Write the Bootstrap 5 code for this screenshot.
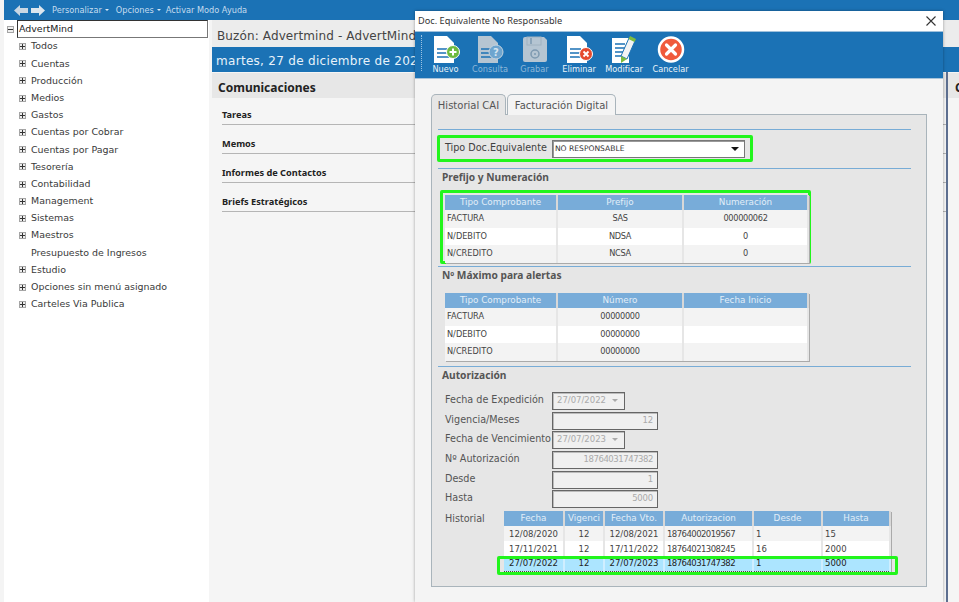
<!DOCTYPE html>
<html lang="es"><head><meta charset="utf-8"><title>AdvertMind</title>
<link rel="stylesheet" href="https://cdn.jsdelivr.net/npm/bootstrap@5.3.0/dist/css/bootstrap.min.css">
<style>
html,body{height:602px;overflow:hidden}
body{font-family:"DejaVu Sans","Noto Sans",sans-serif;font-size:10px;color:#404040;background:#f4f4f4;position:relative;padding-left:4px}
.topbar{height:20px;background:#1b72b5;color:#c5dcef;font-size:8.2px;padding-left:10px}
.topbar span{white-space:nowrap}
.arrow{width:14px;height:11px;display:block;margin-right:3px}
.caret-mini{display:inline-block;border:2.5px solid transparent;border-top-color:#dbe9f5;border-bottom:0;margin-left:3px;vertical-align:middle}
.menu-first{margin:0 7px 0 4px}
.menu-second{margin-right:5px}
.mainarea{height:582px}
.treepanel{width:205px;background:#fff;flex:none;font-size:9.45px;color:#3a3a3a}
.rootnode{height:18px;padding-left:3px}
.rootnode .plusbox{margin-right:3px}
.rootlabel{border:1px solid #333;border-right-color:#777;border-bottom-color:#777;width:191px;height:18px;line-height:16px;padding-left:1px;color:#222}
.treelist{margin-top:-.1px}
.treerow{height:17.2px;padding-left:15px}
.plusbox{width:5px;height:5px;border:1px solid #a5a5a5;background:#eee;flex:none;margin-right:5px;position:relative;display:block;box-sizing:content-box}
.plusbox::before{content:"";position:absolute;left:0;right:0;top:2px;height:1px;background:#333}
.plusbox.isplus::after{content:"";position:absolute;top:0;bottom:0;left:2px;width:1px;background:#333}
.nobox{width:12px;flex:none}
.contentpane{flex:1;min-width:0;overflow:hidden;background:#f5f5f5;padding-left:3px}
.buzon{height:27px;background:#ececec;font-size:12px;color:#444;padding:7px 5px 0;white-space:nowrap;letter-spacing:.12px}
.dateband{height:25px;background:#1b72b5;color:#e8f2fa;font-size:12px;padding:5px 4px 0;letter-spacing:.3px;white-space:nowrap}
.comm{height:25px;margin-top:1px;background:#e7e7e7;font-weight:700;color:#222;padding:6px 6px 0;line-height:18px;font-family:"Noto Sans",sans-serif;font-size:12px}
.commrow{margin-left:10px;height:29px;border-bottom:1px solid #b5b5b5;font-weight:700;font-size:9.2px;color:#222;padding-top:12px;line-height:14px;font-family:"Noto Sans",sans-serif}
.commfirst{padding-top:10px;height:27px}
.sidestub{position:absolute;left:946px;top:72px;width:13px;height:530px;border-left:2px solid #5d6f90;background:#f5f5f5}
.sidestub span{display:block;background:#e7e7e7;padding:6px 0 0 7px;height:25px;line-height:18px;font-weight:700;font-size:12px;color:#222;margin-top:1px;overflow:hidden;font-family:"Noto Sans",sans-serif}
.winbox{position:absolute;left:415px;top:11px;width:528px;height:591px;background:#f4f4f4;box-shadow:0 0 3px rgba(0,0,0,.35)}
.wintitle{height:21px;background:#fff;color:#333;font-size:9.2px;font-family:"Noto Sans",sans-serif;padding:0 3px;border-bottom:1px solid #9fc1dc}
.closex{width:10px;height:10px;margin-right:4px}
.tools{height:47px;background:#1b72b5;padding-left:6px;border-bottom:1px solid #a8c4da}
.dotsep{width:0;height:36px;border-left:1px dotted #9cc3e3;margin:3px 1px 0 0}
.tool{width:45px;text-align:center;color:#e9f2f9;font-size:8.2px;padding-top:3px;line-height:9px;white-space:nowrap}
.tool svg{display:block;margin:0 auto;width:30px;height:30px}
.tool.off{color:#8db7d8}
.tool.w44{width:44px}.tool.w46{width:46px}.tool.w47{width:47px}
.tabstrip{margin:15px 0 0 16px;height:21px;gap:1px;font-size:10px;position:relative;z-index:1}
.tabitem{border:1px solid #a9b4bb;border-bottom:0;border-radius:5px 5px 0 0;padding:3px 0 0;background:#f4f4f4;color:#555;white-space:nowrap;text-align:center}
.tabitem.on{background:#e6e6e6;width:75px}
.tabitem.other{width:109px}
.tabpane{margin:-1px 16px 0;height:473px;background:#e6e6e6;border:1px solid #a9b4bb;padding:14px 15px 0 6px}
.secline{height:0;border-top:1px solid #78acd6}
.secline.after-tipo{margin-top:6px}
.secline.after-grid{margin-top:2px}
.greenbox{border:3px solid #22f51c;border-radius:2px}
.tiporow{height:27px;margin:5px 158px 0 -1px;padding-left:5px;gap:5px;font-size:9.65px}
.fakeselect{width:193px;height:18px;background:#fff;border:1px solid #777;box-shadow:inset 1px 1px 0 #999;font-size:7.6px;line-height:16px;padding-left:2px;position:relative;color:#333}
.fakeselect::after{content:"";position:absolute;right:5px;top:6px;border:4px solid transparent;border-top-color:#111;border-bottom:0}
.sectitle{font-size:10.2px;font-weight:700;color:#555;font-family:"Noto Sans",sans-serif;padding:2px 0 0 4px;height:17px;line-height:13px}
.gridwrap{margin:4px 100px 0 2px;padding:2px 0 0 2px;height:74px}
table.sheet{table-layout:fixed;border-collapse:collapse;font-size:8.2px;color:#444;margin:0;box-shadow:1px 1px 0 #aaa}
table.sheet th{background:#78acd9;color:#e2eef8;font-weight:400;text-align:center;height:15px;padding:0;border-right:2px solid #d8d8d8;font-size:8.8px;line-height:13px}
table.sheet td{height:17.5px;padding:0 2px 1px;border-right:2px solid #e6e6e6;white-space:nowrap;overflow:hidden;line-height:12px}
table.sheet td.text-center{letter-spacing:-.3px}
table.sheet tr:nth-child(odd) td{background:#f3f3f3}
table.sheet tr:nth-child(even) td{background:#fff}
.plainwrap{margin:9px 0 0 7px;height:73px}
.formrows{padding-left:7px;margin-top:8px}
.frow{height:19.7px}
.flabel{width:107px;flex:none;font-size:9.65px;color:#555;white-space:nowrap;line-height:15px}
.fbox{height:18px;background:#f0f0f0;border:1px solid #666;box-shadow:inset 1px 1px 0 #bbb;font-size:8.5px;color:#aaa;line-height:15px;padding:0 4px;text-align:right;width:106px;letter-spacing:-.2px}
.numtight{letter-spacing:-.45px}
.fdate{width:73px;text-align:left;position:relative;letter-spacing:0}
.fdate::after{content:"";position:absolute;right:6px;top:6px;border:3px solid transparent;border-top-color:#aaa;border-bottom:0}
.histrow{margin-top:1px;padding-left:7px;position:relative}
.histlabel{width:59px;flex:none;font-size:9.65px;color:#555;padding-top:1px}
table.sheet.hist th{height:15px}
table.sheet.hist td{height:15px;font-size:8.5px;line-height:12px;letter-spacing:0;padding-bottom:0}
table.sheet.hist td:nth-child(4){letter-spacing:-.55px}
table.sheet.hist tr.picked td{background:#ace5ff;color:#222;border-bottom:1px dotted #444;border-right-color:#cfeeff}
.pickmark{position:absolute;left:59px;top:45px;width:401px;height:19px;border:3px solid #22f51c;border-radius:2px;pointer-events:none}
</style></head>
<body>
<div class="topbar d-flex align-items-center">
<svg class="arrow" viewBox="0 0 14 11"><path fill="#c9d7e3" d="M0 5.500 6 0v3h8v5H6v3z"/></svg>
<svg class="arrow" viewBox="0 0 14 11"><path fill="#dce6ee" d="M14 5.500 8 0v3H0v5h8v3z"/></svg>
<span class="menu-first">Personalizar<i class="caret-mini"></i></span><span class="menu-second">Opciones<i class="caret-mini"></i></span><span>Activar Modo Ayuda</span>
</div>
<div class="mainarea d-flex">
<div class="treepanel">
<div class="rootnode d-flex align-items-center"><i class="plusbox"></i><div class="rootlabel">AdvertMind</div></div>
<div id="tree" class="treelist"></div>
</div>
<div class="contentpane">
<div class="buzon">Buzón: Advertmind - AdvertMind</div>
<div class="dateband">martes, 27 de diciembre de 2022</div>
<div class="comm">Comunicaciones</div>
<div class="commrow commfirst">Tareas</div>
<div class="commrow">Memos</div>
<div class="commrow">Informes de Contactos</div>
<div class="commrow">Briefs Estratégicos</div>
</div>
</div>
<div class="sidestub"><span>C</span></div>
<div class="winbox">
<div class="wintitle d-flex align-items-center justify-content-between"><span>Doc. Equivalente No Responsable</span>
<svg class="closex" viewBox="0 0 10 10"><path d="M.5.5l9 9M9.500.5l-9 9" stroke="#333" stroke-width="1.1"/></svg></div>
<div class="tools d-flex">
<div class="dotsep"></div>
<div class="tool"><svg viewBox="0 0 30 30"><path fill="#fff" d="M3 1h13l7 7v20H3z"/><path d="M6 14h11M6 18h11M6 22h13" stroke="#1b72b5" stroke-width="1.5"/><circle cx="22" cy="17" r="6.5" fill="#6cba3f" stroke="#fff" stroke-width="1"/><path d="M22 13.500v7M18.500 17h7" stroke="#fff" stroke-width="2"/></svg>Nuevo</div>
<div class="tool off w44"><svg viewBox="0 0 30 30"><path fill="#b5c5d2" d="M3 1h13l7 7v20H3z"/><path d="M6 14h11M6 18h11M6 22h13" stroke="#1b72b5" stroke-width="1.5"/><circle cx="21" cy="17" r="7" fill="#6ea5cf" stroke="#c5d3de"/><text x="21" y="21" font-size="10" font-weight="700" text-anchor="middle" fill="#d5e4ef">?</text></svg>Consulta</div>
<div class="tool off"><svg viewBox="0 0 30 30"><path fill="#b5c5d2" d="M3 4q0-2 2-2h19l3 3v20q0 2-2 2H5q-2 0-2-2z"/><path d="M11 3v6" stroke="#7d99b0" stroke-width="1.5"/><rect x="7" y="2" width="14" height="8" fill="none" stroke="#a0b2c0"/><circle cx="15" cy="19" r="4" fill="none" stroke="#7d99b0" stroke-width="1.5"/><circle cx="15" cy="19" r="1" fill="#7d99b0"/></svg>Grabar</div>
<div class="tool w44"><svg viewBox="0 0 30 30"><path fill="#fff" d="M3 1h13l7 7v20H3z"/><path d="M6 14h11M6 18h11M6 22h13" stroke="#1b72b5" stroke-width="1.5"/><circle cx="22" cy="19" r="6.5" fill="#e5492d" stroke="#fff"/><path d="M19.500 16.500l5 5M24.500 16.500l-5 5" stroke="#fff" stroke-width="1.8"/></svg>Eliminar</div>
<div class="tool w46"><svg viewBox="0 0 30 30"><path fill="#fff" d="M3 3h17v25H3z"/><path d="M6 9h10M6 13h10M6 17h8M6 21h7" stroke="#1b72b5" stroke-width="1.5"/><path fill="#f3f3f3" stroke="#1b72b5" d="M20 3l6 3-8 18-6-3z"/><path fill="#7dbb3f" d="M21 1l6 3-1.500 3-6-3zM12 21l6 3-6 4z"/></svg>Modificar</div>
<div class="tool w47"><svg viewBox="0 0 30 30"><circle cx="15" cy="14.500" r="12" fill="#f05a3c" stroke="#fff" stroke-width="2.500"/><path d="M10.500 10l9 9M19.500 10l-9 9" stroke="#fff" stroke-width="3.200" stroke-linecap="round"/></svg>Cancelar</div>
</div>
<div class="tabstrip d-flex"><div class="tabitem on">Historial CAI</div><div class="tabitem other">Facturación Digital</div></div>
<div class="tabpane">
<div class="secline"></div>
<div class="greenbox tiporow d-flex align-items-center"><span>Tipo Doc.Equivalente</span><div class="fakeselect">NO RESPONSABLE</div></div>
<div class="secline after-tipo"></div>
<div class="sectitle">Prefijo y Numeración</div>
<div class="greenbox gridwrap" id="g1"></div>
<div class="secline after-grid"></div>
<div class="sectitle">Nº Máximo para alertas</div>
<div class="plainwrap" id="g2"></div>
<div class="secline"></div>
<div class="sectitle">Autorización</div>
<div class="formrows">
<div class="frow d-flex"><div class="flabel">Fecha de Expedición</div><div class="fbox fdate">27/07/2022</div></div>
<div class="frow d-flex"><div class="flabel">Vigencia/Meses</div><div class="fbox">12</div></div>
<div class="frow d-flex"><div class="flabel">Fecha de Vencimiento</div><div class="fbox fdate">27/07/2023</div></div>
<div class="frow d-flex"><div class="flabel">Nº Autorización</div><div class="fbox numtight">18764031747382</div></div>
<div class="frow d-flex"><div class="flabel">Desde</div><div class="fbox">1</div></div>
<div class="frow d-flex"><div class="flabel">Hasta</div><div class="fbox">5000</div></div>
</div>
<div class="histrow d-flex">
<div class="histlabel">Historial</div>
<div id="g3"></div>
<div class="pickmark"></div>
</div>
</div>
</div>
<script>
var items=["Todos","Cuentas","Producción","Medios","Gastos","Cuentas por Cobrar","Cuentas por Pagar","Tesorería","Contabilidad","Management","Sistemas","Maestros","Presupuesto de Ingresos","Estudio","Opciones sin menú asignado","Carteles Via Publica"];
document.getElementById('tree').innerHTML=items.map(function(t){return '<div class="treerow d-flex align-items-center">'+(t.indexOf('Presup')==0?'<i class="nobox"></i>':'<i class="plusbox isplus"></i>')+'<span>'+t+'</span></div>'}).join('');
function tbl(cls,w,heads,rows,aligns,picked){
 var tw=w.reduce(function(a,b){return a+b},0);
 return '<table class="sheet '+cls+'" style="width:'+tw+'px"><colgroup>'+w.map(function(x){return '<col style="width:'+x+'px">'}).join('')+'</colgroup><thead><tr>'+heads.map(function(h){return '<th>'+h+'</th>'}).join('')+'</tr></thead><tbody>'+rows.map(function(r,i){return '<tr class="'+(i===picked?'picked':'')+'">'+r.map(function(c,j){return '<td class="text-'+aligns[j]+'">'+c+'</td>'}).join('')+'</tr>'}).join('')+'</tbody></table>';
}
var a=['start','center','center'];
document.getElementById('g1').innerHTML=tbl('',[112,126,125],['Tipo Comprobante','Prefijo','Numeración'],[['FACTURA','SAS','000000062'],['N/DEBITO','NDSA','0'],['N/CREDITO','NCSA','0']],a);
document.getElementById('g2').innerHTML=tbl('',[112,126,125],['Tipo Comprobante','Número','Fecha Inicio'],[['FACTURA','00000000',''],['N/DEBITO','00000000',''],['N/CREDITO','00000000','']],a);
document.getElementById('g3').innerHTML=tbl('hist',[60,40,60,89,69,68],['Fecha','Vigenci','Fecha Vto.','Autorizacion','Desde','Hasta'],[['12/08/2020','12','12/08/2021','18764002019567','1','15'],['17/11/2021','12','17/11/2022','18764021308245','16','2000'],['27/07/2022','12','27/07/2023','18764031747382','1','5000']],['center','center','center','start','start','start'],2);
</script>
<script src="https://cdn.jsdelivr.net/npm/bootstrap@5.3.0/dist/js/bootstrap.bundle.min.js"></script>
</body></html>
